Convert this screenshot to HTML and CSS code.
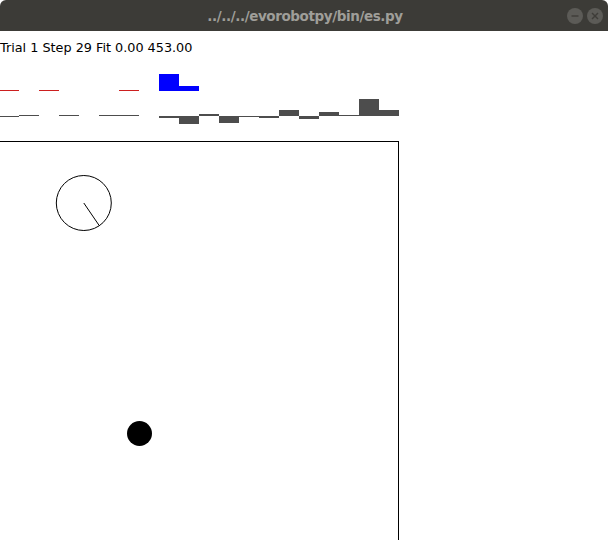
FILE: index.html
```html
<!DOCTYPE html>
<html>
<head>
<meta charset="utf-8">
<link rel="stylesheet" href="styles.css">
</head>
<body>
<div class="window">
  <div class="titlebar">
    <span class="title">../../../evorobotpy/bin/es.py</span>
    <div class="controls">
      <span class="wbtn">
        <svg width="16" height="16" viewBox="0 0 16 16"><circle cx="8" cy="8" r="8" class="btn-bg"/><line x1="4.5" y1="8" x2="11.5" y2="8" class="btn-glyph"/></svg>
      </span>
      <span class="wbtn">
        <svg width="16" height="16" viewBox="0 0 16 16"><circle cx="8" cy="8" r="8" class="btn-bg"/><line x1="5" y1="5" x2="11" y2="11" class="btn-glyph"/><line x1="11" y1="5" x2="5" y2="11" class="btn-glyph"/></svg>
      </span>
    </div>
  </div>
  <div class="status">Trial 1 Step 29 Fit 0.00 453.00</div>
  <svg class="canvas" width="608" height="485" viewBox="0 55 608 485">
    <g class="red">
      <rect x="-1" y="90" width="20" height="1"/>
      <rect x="39" y="90" width="20" height="1"/>
      <rect x="119" y="90" width="20" height="1"/>
    </g>
    <g class="blue">
      <rect x="159" y="74" width="20" height="17"/>
      <rect x="179" y="86" width="20" height="5"/>
    </g>
    <g class="gray">
      <rect x="-1" y="116" width="20" height="1"/>
      <rect x="19" y="115" width="20" height="1"/>
      <rect x="59" y="115" width="20" height="1"/>
      <rect x="99" y="115" width="20" height="1"/>
      <rect x="119" y="115" width="20" height="1"/>
      <rect x="159" y="116" width="20" height="2"/>
      <rect x="179" y="116" width="20" height="8"/>
      <rect x="199" y="114" width="20" height="2"/>
      <rect x="219" y="116" width="20" height="7"/>
      <rect x="239" y="116" width="20" height="1"/>
      <rect x="259" y="116" width="20" height="2"/>
      <rect x="279" y="110" width="20" height="6"/>
      <rect x="299" y="116" width="20" height="3"/>
      <rect x="319" y="112" width="20" height="4"/>
      <rect x="339" y="115" width="20" height="1"/>
      <rect x="359" y="99" width="20" height="17"/>
      <rect x="379" y="110" width="20" height="6"/>
    </g>
    <rect class="arena" x="-1.5" y="141.5" width="400" height="420"/>
    <circle class="robot" cx="83.8" cy="203" r="27.5"/>
    <line class="robot" x1="83.8" y1="203" x2="99.3" y2="225.7"/>
    <circle class="target" cx="139.5" cy="433.5" r="12.5"/>
  </svg>
</div>
</body>
</html>
```
FILE: styles.css
```css
html, body {
  margin: 0;
  padding: 0;
  background: #ffffff;
}
.window {
  width: 608px;
  height: 540px;
  overflow: hidden;
  background: #ffffff;
}
.titlebar {
  position: relative;
  height: 31px;
  background: #3c3b37;
  border-radius: 6px 6px 0 0;
  display: flex;
  align-items: center;
  justify-content: center;
}
.title {
  font-family: "DejaVu Sans", sans-serif;
  font-weight: bold;
  font-size: 13.5px;
  color: #9f9e99;
  letter-spacing: -0.4px;
  padding-left: 2px;
}
.controls {
  position: absolute;
  right: 5px;
  top: 8px;
  display: flex;
  gap: 4px;
}
.wbtn svg {
  display: block;
}
.btn-bg {
  fill: #5c5b57;
}
.btn-glyph {
  stroke: #3e3d39;
  stroke-width: 1.4;
}
.status {
  height: 14px;
  padding-top: 10px;
  font-family: "DejaVu Sans", sans-serif;
  font-size: 12.8px;
  line-height: 14px;
  color: #000000;
}
.canvas {
  display: block;
}
.red rect { fill: #cc1f1f; }
.blue rect { fill: #0000ff; }
.gray rect { fill: #4d4d4d; }
.arena {
  fill: none;
  stroke: #000000;
  stroke-width: 1;
}
.robot {
  fill: none;
  stroke: #000000;
  stroke-width: 1;
}
.target {
  fill: #000000;
}
```
